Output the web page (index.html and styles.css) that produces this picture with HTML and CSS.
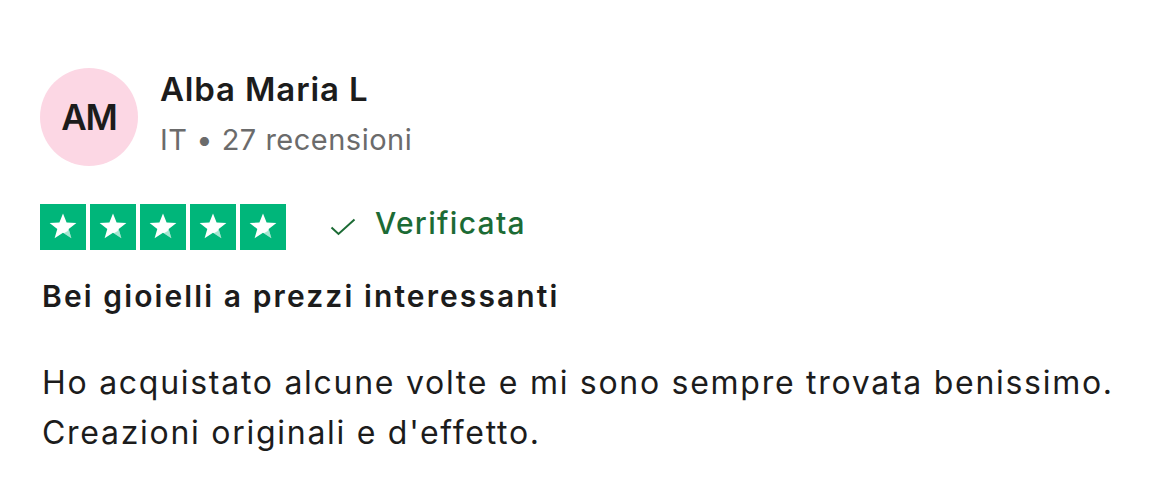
FILE: index.html
```html
<!DOCTYPE html>
<html lang="it">
<head>
<meta charset="utf-8">
<link rel="stylesheet" href="styles.css">
</head>
<body>
<article class="review">
  <header class="consumer">
    <div class="avatar">AM</div>
    <div class="consumer-info">
      <div class="name">Alba Maria L</div>
      <div class="meta">IT • 27 recensioni</div>
    </div>
  </header>
  <div class="rating-row">
    <div class="stars">
      <span class="star"><svg viewBox="0 0 46 46" width="46" height="46"><polygon points="23,9.5 26.6,18.6 36.4,18.9 28.7,24.9 31.4,34.3 23,28.8 14.6,34.3 17.3,24.9 9.6,18.9 19.4,18.6" fill="#fff"/><polygon points="27.4,27.3 28.7,24.9 31.4,34.3 23.6,29.2" fill="#00b67a" opacity="0.35"/></svg></span>
      <span class="star"><svg viewBox="0 0 46 46" width="46" height="46"><polygon points="23,9.5 26.6,18.6 36.4,18.9 28.7,24.9 31.4,34.3 23,28.8 14.6,34.3 17.3,24.9 9.6,18.9 19.4,18.6" fill="#fff"/><polygon points="27.4,27.3 28.7,24.9 31.4,34.3 23.6,29.2" fill="#00b67a" opacity="0.35"/></svg></span>
      <span class="star"><svg viewBox="0 0 46 46" width="46" height="46"><polygon points="23,9.5 26.6,18.6 36.4,18.9 28.7,24.9 31.4,34.3 23,28.8 14.6,34.3 17.3,24.9 9.6,18.9 19.4,18.6" fill="#fff"/><polygon points="27.4,27.3 28.7,24.9 31.4,34.3 23.6,29.2" fill="#00b67a" opacity="0.35"/></svg></span>
      <span class="star"><svg viewBox="0 0 46 46" width="46" height="46"><polygon points="23,9.5 26.6,18.6 36.4,18.9 28.7,24.9 31.4,34.3 23,28.8 14.6,34.3 17.3,24.9 9.6,18.9 19.4,18.6" fill="#fff"/><polygon points="27.4,27.3 28.7,24.9 31.4,34.3 23.6,29.2" fill="#00b67a" opacity="0.35"/></svg></span>
      <span class="star"><svg viewBox="0 0 46 46" width="46" height="46"><polygon points="23,9.5 26.6,18.6 36.4,18.9 28.7,24.9 31.4,34.3 23,28.8 14.6,34.3 17.3,24.9 9.6,18.9 19.4,18.6" fill="#fff"/><polygon points="27.4,27.3 28.7,24.9 31.4,34.3 23.6,29.2" fill="#00b67a" opacity="0.35"/></svg></span>
    </div>
    <div class="verified">
      <svg class="check" viewBox="0 0 26 18" width="26" height="18"><path d="M1.5 9.5 L8.5 16 L24.5 1.5" fill="none" stroke="#1c6b35" stroke-width="2"/></svg>
      <span class="verified-label">Verificata</span>
    </div>
  </div>
  <h2 class="title">Bei gioielli a prezzi interessanti</h2>
  <p class="text">Ho acquistato alcune volte e mi sono sempre trovata benissimo.<br>Creazioni originali e d'effetto.</p>
</article>
</body>
</html>
```

FILE: styles.css
```css
html, body {
  margin: 0;
  padding: 0;
  background: #ffffff;
}
body {
  font-family: Inter, "Liberation Sans", sans-serif;
  color: #1c1c1c;
}
.review {
  padding: 68px 40px 0 40px;
}
.consumer {
  display: flex;
  align-items: flex-start;
  gap: 22px;
}
.avatar {
  width: 98px;
  height: 98px;
  border-radius: 50%;
  background: #fcd7e4;
  display: flex;
  align-items: center;
  justify-content: center;
  font-size: 35px;
  font-weight: 600;
  color: #1c1c1c;
  letter-spacing: -1.2px;
}
.consumer-info {
  display: flex;
  flex-direction: column;
  gap: 13px;
  margin-top: 1px;
}
.name {
  font-size: 33px;
  line-height: 40px;
  font-weight: 600;
  letter-spacing: 0.85px;
}
.meta {
  font-size: 29px;
  line-height: 36px;
  color: #6b6b6b;
  letter-spacing: 0.5px;
}
.rating-row {
  display: flex;
  align-items: center;
  gap: 44px;
  margin-top: 38px;
}
.stars {
  display: flex;
  gap: 4px;
}
.star {
  width: 46px;
  height: 46px;
  background: #00b67a;
  display: block;
}
.star svg {
  display: block;
}
.verified {
  display: flex;
  align-items: center;
  gap: 19px;
  color: #1c6b35;
  font-size: 30px;
  line-height: 36px;
  font-weight: 500;
  letter-spacing: 1.3px;
}
.verified-label {
  padding-bottom: 8px;
}
.check {
  display: block;
}
.title {
  margin: 28px 0 0 2px;
  font-size: 30px;
  line-height: 36px;
  font-weight: 600;
  letter-spacing: 2.1px;
}
.text {
  margin: 44px 0 0 2px;
  font-size: 32px;
  line-height: 50px;
  font-weight: 400;
  letter-spacing: 1.72px;
}
```
